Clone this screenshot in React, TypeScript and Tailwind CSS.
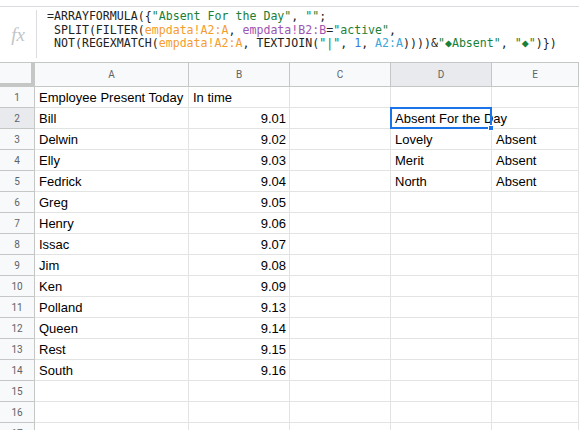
import React from "react";

const cols = ["A", "B", "C", "D", "E"];

const data: [string, string, string, string, string][] = [
  ["Employee Present Today", "In time", "", "", ""],
  ["Bill", "9.01", "", "Absent For the Day", ""],
  ["Delwin", "9.02", "", "Lovely", "Absent"],
  ["Elly", "9.03", "", "Merit", "Absent"],
  ["Fedrick", "9.04", "", "North", "Absent"],
  ["Greg", "9.05", "", "", ""],
  ["Henry", "9.06", "", "", ""],
  ["Issac", "9.07", "", "", ""],
  ["Jim", "9.08", "", "", ""],
  ["Ken", "9.09", "", "", ""],
  ["Polland", "9.13", "", "", ""],
  ["Queen", "9.14", "", "", ""],
  ["Rest", "9.15", "", "", ""],
  ["South", "9.16", "", "", ""],
  ["", "", "", "", ""],
  ["", "", "", "", ""],
  ["", "", "", "", ""],
];

const G = "text-[#188038]";
const O = "text-[#f59c2f]";
const P = "text-[#9c55b0]";
const LB = "text-[#3aa7d6]";
const B = "text-[#3b78d8]";

export default function App() {
  return (
    <div className="w-[579px] h-[430px] overflow-hidden bg-white" style={{ fontFamily: "'Liberation Sans', Arial, sans-serif" }}>
      <div className="h-[6px]" />
      {/* formula bar */}
      <div className="h-[57px] border-t border-b border-t-[#dadce0] border-b-[#c4c7c5] flex">
        <div className="w-[36px] flex items-center justify-center pb-[1px]">
          <span className="italic text-[19px] text-[#c2c4c7] leading-none" style={{ fontFamily: "'Liberation Serif', serif" }}>fx</span>
        </div>
        <div className="w-px bg-[#dadce0] mt-[3px] h-[48px]" />
        <div
          className="pl-[10px] pt-[3px] text-[11.6px] leading-[13.5px] text-[#222] whitespace-pre"
          style={{ fontFamily: "'DejaVu Sans Mono', 'Liberation Mono', monospace" }}
        >
          <div>
            ={"ARRAYFORMULA({"}
            <span className={G}>"Absent For the Day"</span>, <span className={G}>""</span>;
          </div>
          <div>
            {" SPLIT(FILTER("}
            <span className={O}>empdata!A2:A</span>, <span className={P}>empdata!B2:B</span>=<span className={G}>"active"</span>,
          </div>
          <div>
            {" NOT(REGEXMATCH("}
            <span className={O}>empdata!A2:A</span>, TEXTJOIN(<span className={G}>"|"</span>, <span className={B}>1</span>,{" "}
            <span className={LB}>A2:A</span>{"))))&"}
            <span className={G}>"◆Absent"</span>, <span className={G}>"◆"</span>{")})"}
          </div>
        </div>
      </div>
      {/* grid */}
      <div className="grid grid-cols-[35px_154px_101px_101px_101px_1fr]">
        {/* header row */}
        <div className="h-[24px] bg-[#f8f9fa] border-r-4 border-b-4 border-[#c4c7c5]" />
        {cols.map((c) => (
          <div
            key={c}
            className={`h-[24px] border-r border-b border-[#c4c7c5] flex items-center justify-center text-[10px] text-[#5f6368] ${
              c === "D" ? "bg-[#e8eaed]" : "bg-[#f8f9fa]"
            }`}
            style={{ fontFamily: "Roboto, sans-serif" }}
          >
            {c}
          </div>
        ))}
        {data.map((row, ri) => (
          <React.Fragment key={ri}>
            <div
              className={`h-[21px] border-r border-b border-[#c4c7c5] flex items-center justify-center text-[10px] text-[#5f6368] ${
                ri === 1 ? "bg-[#e8eaed]" : "bg-[#f8f9fa]"
              }`}
              style={{ fontFamily: "Roboto, sans-serif" }}
            >
              {ri + 1}
            </div>
            {row.map((v, ci) => {
              const isNum = ci === 1 && ri > 0 && v !== "";
              const sel = ri === 1 && ci === 3;
              return (
                <div
                  key={ci}
                  className={`relative h-[21px] border-r border-b border-[#e2e3e3] flex items-center pt-[2px] text-[13px] text-black whitespace-nowrap ${
                    isNum ? "justify-end pr-[3px]" : "pl-[4px]"
                  } ${sel ? "z-10" : ""}`}
                >
                  {v}
                  {sel && (
                    <>
                      <div className="absolute left-[-1px] top-[-1px] w-[102px] h-[22px] border-2 border-[#1a73e8] pointer-events-none" />
                      <div className="absolute left-[97px] top-[17px] w-[6px] h-[6px] bg-[#1a73e8] border border-white" />
                    </>
                  )}
                </div>
              );
            })}
          </React.Fragment>
        ))}
      </div>
    </div>
  );
}
